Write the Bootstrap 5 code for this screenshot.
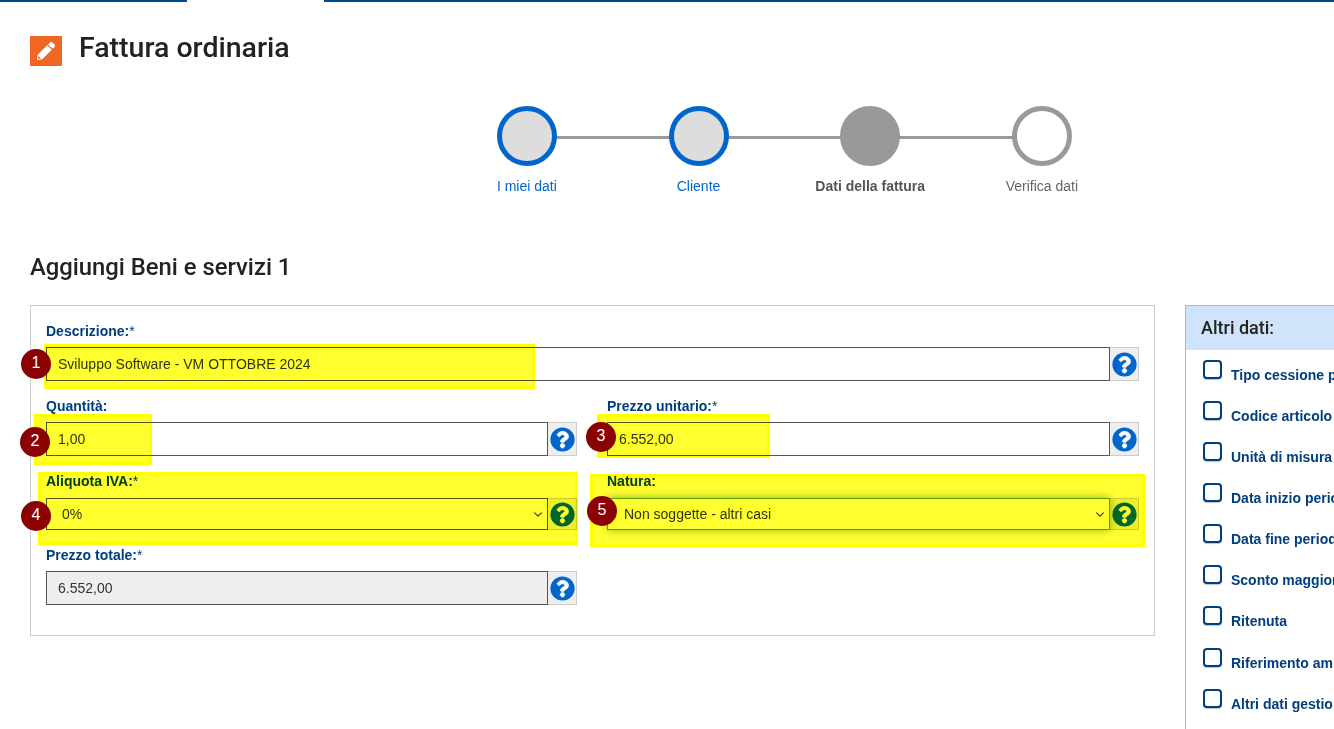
<!DOCTYPE html>
<html lang="it">
<head>
<meta charset="utf-8">
<title>Fattura ordinaria</title>
<link href="https://cdn.jsdelivr.net/npm/bootstrap@5.3.0/dist/css/bootstrap.min.css" rel="stylesheet">
<style>
html,body{height:729px;overflow:hidden;background:#fff}
body{font-family:"Liberation Sans",Arial,sans-serif;font-size:14px;color:#333}
.sheet{width:1334px;height:729px;overflow:hidden;position:relative}
.topline{height:2px}
.topseg{background:#004a8f}
.topseg-a{width:187px}
.topseg-b{width:137px;background:#fff}
.titlebar{padding:34px 0 0 30px;height:104px}
.titleicon{width:32px;height:30px;background:#ee6723}
.titleicon svg{width:18px;height:18px;fill:#fff}
.pagetitle{font-family:Roboto,sans-serif;font-weight:500;font-size:28.5px;line-height:26px;color:#222;margin:-1px 0 0 17px}
.stepper{list-style:none;margin:0;padding:0 0 0 441px;height:110px}
.stepitem{width:171.7px;position:relative;text-align:center}
.stepline{position:absolute;top:30px;left:86px;width:172px;height:3px;background:#999}
.stepdot{width:60px;height:60px;border-radius:50%;border:5px solid #06c;background:#ddd;position:relative;margin:0 auto 11px}
.stepdot-now{border-color:#999;background:#999}
.stepdot-next{border-color:#999;background:#fff}
.steplabel{font-size:14px;line-height:18px;color:#06c}
.steplabel-now{color:#555;font-weight:700}
.steplabel-next{color:#666}
.sectiontitle{font-family:Roboto,sans-serif;font-weight:500;font-size:23.8px;line-height:30px;color:#222;margin:0 0 23px 30px;padding-top:36px}
.workarea{padding-left:30px;gap:30px;width:1700px}
.formbox{width:1125px;height:331px;border:1px solid #ccc;padding:15px}
.formgrid{--bs-gutter-x:30px}
.formgrid .col-left{width:561px}
.formgrid .col-right{width:562px}
.fieldlabel{display:block;font-size:14px;font-weight:700;line-height:20px;color:#003e7e;margin:0 0 6px}
.fieldlabel span{font-weight:400}
.fieldwrap{margin-bottom:15px}
.fieldlabel-sel{margin-bottom:7px}
.fieldwrap .form-control,.fieldwrap .form-select{height:34px;border:1px solid #555;border-radius:0;font-size:14px;color:#333;padding:0 11px;box-shadow:none}
.fieldwrap .form-select{height:32px;padding-left:15px;background-position:right 4px center;background-size:10px 9px}
.fieldwrap .select-natura{padding-left:16px}
.fieldwrap .form-control:disabled{background:#eee;opacity:1}
.fieldwrap .select-glow{border-color:#5aa02c;box-shadow:0 0 8px rgba(60,120,40,.55)}
.fieldwrap .input-group-text{width:30px;padding:0 0 0 2px;justify-content:center;background:#eee;border:1px solid #ccc;border-left:0;border-radius:0}
.helpicon{width:25px;height:25px}
.help-disc{fill:#06c}
.help-mark{fill:#fff;stroke:#fff;stroke-width:16}
.sidebox{width:300px;height:450px;border:1px solid #97bde8}
.sidehead{height:44px;background:#cfe4fb;padding:0 15px;font-family:Roboto,sans-serif;font-weight:500;font-size:18px;line-height:44px;color:#222}
.sidelist{padding:10px 0 0 17px;gap:22px}
.sideitem{height:19px}
.sideitem-low{margin-top:1px}
.sidecheck{width:19px;height:19px;border:2px solid #003e7e;border-radius:4px;background:#fff;box-shadow:0 1px 1px rgba(0,0,0,.25);flex:none}
.sidelabel{font-size:14px;font-weight:700;color:#003e7e;line-height:18px;margin:6px 0 0 9px;white-space:nowrap}
.mark-hl{position:absolute;background:#ffff30;border:3px solid #ff0;mix-blend-mode:multiply}
.hl1{left:44px;top:344px;width:491px;height:45px}
.hl2{left:34px;top:414px;width:118px;height:51px}
.hl3{left:597px;top:414px;width:173px;height:44px}
.hl4{left:38px;top:472px;width:540px;height:73px}
.hl5{left:590px;top:474px;width:555px;height:73px}
.numdot{position:absolute;width:30px;height:30px;border-radius:50%;background:#8b0000;color:#fff;font-size:16px;line-height:28px;text-align:center}
.n1{left:21px;top:349px}
.n2{left:20px;top:427px}
.n3{left:586px;top:422px}
.n4{left:21px;top:501px}
.n5{left:587px;top:496px}
</style>
</head>
<body>
<div class="sheet">
  <div class="topline d-flex">
    <div class="topseg topseg-a"></div>
    <div class="topseg-b"></div>
    <div class="topseg flex-grow-1"></div>
  </div>
  <div class="titlebar d-flex align-items-start">
    <div class="titleicon d-flex align-items-center justify-content-center">
      <svg viewBox="0 0 512 512"><path d="M497.9 142.1l-46.1 46.1c-4.7 4.7-12.3 4.7-17 0l-111-111c-4.7-4.7-4.7-12.3 0-17l46.1-46.1c18.7-18.7 49.1-18.7 67.9 0l60.1 60.1c18.8 18.7 18.8 49.1 0 67.9zM284.2 99.8L21.6 362.4.4 483.9c-2.9 16.4 11.4 30.6 27.8 27.8l121.5-21.3 262.6-262.6c4.7-4.7 4.7-12.3 0-17l-111-111c-4.8-4.7-12.4-4.7-17.1 0z"/><path fill="#ee6723" d="M44 400l68 68-66 12-14-14z"/></svg>
    </div>
    <h1 class="pagetitle">Fattura ordinaria</h1>
  </div>
  <ul class="stepper d-flex">
    <li class="stepitem"><div class="stepline"></div><div class="stepdot"></div><div class="steplabel">I miei dati</div></li>
    <li class="stepitem"><div class="stepline"></div><div class="stepdot"></div><div class="steplabel">Cliente</div></li>
    <li class="stepitem"><div class="stepline"></div><div class="stepdot stepdot-now"></div><div class="steplabel steplabel-now">Dati della fattura</div></li>
    <li class="stepitem"><div class="stepdot stepdot-next"></div><div class="steplabel steplabel-next">Verifica dati</div></li>
  </ul>
  <h2 class="sectiontitle">Aggiungi Beni e servizi 1</h2>
  <div class="workarea d-flex align-items-start">
    <div class="formbox">
      <div class="row formgrid">
        <div class="col-12 fieldwrap">
          <label class="fieldlabel">Descrizione:<span>*</span></label>
          <div class="input-group">
            <input class="form-control" value="Sviluppo Software - VM OTTOBRE 2024">
            <span class="input-group-text"><svg class="helpicon" viewBox="0 0 512 512"><use href="#qmark"/></svg></span>
          </div>
        </div>
        <div class="col-6 col-left fieldwrap">
          <label class="fieldlabel">Quantità:</label>
          <div class="input-group">
            <input class="form-control" value="1,00">
            <span class="input-group-text"><svg class="helpicon" viewBox="0 0 512 512"><use href="#qmark"/></svg></span>
          </div>
        </div>
        <div class="col-6 col-right fieldwrap">
          <label class="fieldlabel">Prezzo unitario:<span>*</span></label>
          <div class="input-group">
            <input class="form-control" value="6.552,00">
            <span class="input-group-text"><svg class="helpicon" viewBox="0 0 512 512"><use href="#qmark"/></svg></span>
          </div>
        </div>
        <div class="col-6 col-left fieldwrap">
          <label class="fieldlabel fieldlabel-sel">Aliquota IVA:<span>*</span></label>
          <div class="input-group">
            <select class="form-select"><option>0%</option></select>
            <span class="input-group-text"><svg class="helpicon" viewBox="0 0 512 512"><use href="#qmark"/></svg></span>
          </div>
        </div>
        <div class="col-6 col-right fieldwrap">
          <label class="fieldlabel fieldlabel-sel">Natura:</label>
          <div class="input-group">
            <select class="form-select select-glow select-natura"><option>Non soggette - altri casi</option></select>
            <span class="input-group-text"><svg class="helpicon" viewBox="0 0 512 512"><use href="#qmark"/></svg></span>
          </div>
        </div>
        <div class="col-6 col-left fieldwrap">
          <label class="fieldlabel">Prezzo totale:<span>*</span></label>
          <div class="input-group">
            <input class="form-control" value="6.552,00" disabled>
            <span class="input-group-text"><svg class="helpicon" viewBox="0 0 512 512"><use href="#qmark"/></svg></span>
          </div>
        </div>
      </div>
    </div>
    <aside class="sidebox flex-shrink-0">
      <div class="sidehead">Altri dati:</div>
      <div class="sidelist d-flex flex-column">
        <div class="sideitem d-flex"><span class="sidecheck"></span><span class="sidelabel">Tipo cessione prestazione</span></div>
        <div class="sideitem d-flex"><span class="sidecheck"></span><span class="sidelabel">Codice articolo</span></div>
        <div class="sideitem d-flex"><span class="sidecheck"></span><span class="sidelabel">Unità di misura</span></div>
        <div class="sideitem d-flex"><span class="sidecheck"></span><span class="sidelabel">Data inizio periodo</span></div>
        <div class="sideitem d-flex"><span class="sidecheck"></span><span class="sidelabel">Data fine periodo</span></div>
        <div class="sideitem d-flex"><span class="sidecheck"></span><span class="sidelabel">Sconto maggiorazione</span></div>
        <div class="sideitem d-flex"><span class="sidecheck"></span><span class="sidelabel">Ritenuta</span></div>
        <div class="sideitem sideitem-low d-flex"><span class="sidecheck"></span><span class="sidelabel">Riferimento amministrazione</span></div>
        <div class="sideitem d-flex"><span class="sidecheck"></span><span class="sidelabel">Altri dati gestionali</span></div>
      </div>
    </aside>
  </div>
  <div class="mark-hl hl1"></div>
  <div class="mark-hl hl2"></div>
  <div class="mark-hl hl3"></div>
  <div class="mark-hl hl4"></div>
  <div class="mark-hl hl5"></div>
  <div class="numdot n1">1</div>
  <div class="numdot n2">2</div>
  <div class="numdot n3">3</div>
  <div class="numdot n4">4</div>
  <div class="numdot n5">5</div>
</div>
<svg width="0" height="0" class="d-block"><defs><g id="qmark"><circle class="help-disc" cx="256" cy="256" r="248"/><path class="help-mark" d="M262.655 90c-54.497 0-89.255 22.957-116.549 63.758-3.536 5.286-2.353 12.415 2.715 16.258l34.699 26.31c5.205 3.947 12.621 3.008 16.665-2.122 17.864-22.658 30.113-35.797 57.303-35.797 20.429 0 45.698 13.148 45.698 32.958 0 14.976-12.363 22.667-32.534 33.976C247.128 238.528 216 254.941 216 296v4c0 6.627 5.373 12 12 12h56c6.627 0 12-5.373 12-12v-1.333c0-28.462 83.186-29.647 83.186-106.667 0-58.002-60.165-102-116.531-102zM256 338c-25.365 0-46 20.635-46 46 0 25.364 20.635 46 46 46s46-20.636 46-46c0-25.365-20.635-46-46-46z"/></g></defs></svg>
<script src="https://cdn.jsdelivr.net/npm/bootstrap@5.3.0/dist/js/bootstrap.bundle.min.js"></script>
</body>
</html>
